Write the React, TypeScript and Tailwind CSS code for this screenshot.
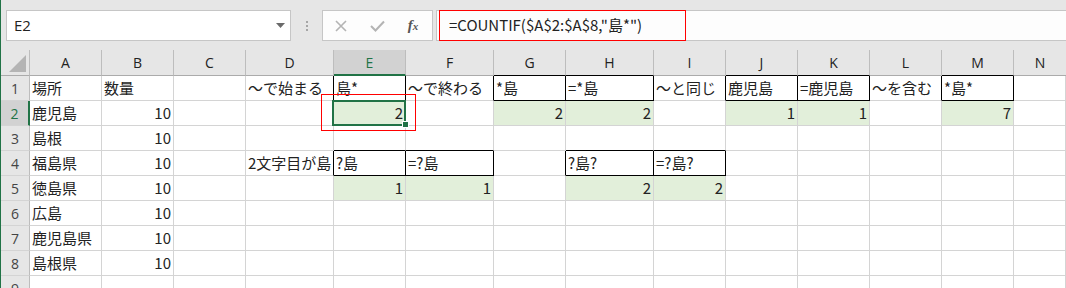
import React from 'react';

const LETTERS = ['A', 'B', 'C', 'D', 'E', 'F', 'G', 'H', 'I', 'J', 'K', 'L', 'M', 'N'];
const ROWS = [1, 2, 3, 4, 5, 6, 7, 8, 9];

const values: Record<string, string> = {
  A1: '場所', B1: '数量', D1: '〜で始まる', E1: '島*', F1: '〜で終わる', G1: '*島', H1: '=*島',
  I1: '〜と同じ', J1: '鹿児島', K1: '=鹿児島', L1: '〜を含む', M1: '*島*',
  A2: '鹿児島', B2: '10', E2: '2', G2: '2', H2: '2', J2: '1', K2: '1', M2: '7',
  A3: '島根', B3: '10',
  A4: '福島県', B4: '10', D4: '2文字目が島', E4: '?島', F4: '=?島', H4: '?島?', I4: '=?島?',
  A5: '徳島県', B5: '10', E5: '1', F5: '1', H5: '2', I5: '2',
  A6: '広島', B6: '10',
  A7: '鹿児島県', B7: '10',
  A8: '島根県', B8: '10',
};

const boxed = new Set(['E1', 'G1', 'H1', 'J1', 'K1', 'M1', 'E4', 'F4', 'H4', 'I4']);
const filled = new Set(['E2', 'G2', 'H2', 'J2', 'K2', 'M2', 'E5', 'F5', 'H5', 'I5']);

const jp = "font-['Noto_Sans_CJK_JP',sans-serif]";
const ui = "font-['Open_Sans','Noto_Sans',sans-serif]";

function key(c: number, r: number) {
  return `${LETTERS[c] ?? ''}${r}`;
}

function Cell({ c, r }: { c: number; r: number }) {
  const id = key(c, r);
  const v = values[id];
  const num = v !== undefined && /^\d+$/.test(v);
  const rightBlack = boxed.has(id) || boxed.has(key(c + 1, r));
  const bottomBlack = boxed.has(id) || boxed.has(key(c, r + 1));
  const selected = id === 'E2';

  return (
    <div
      className={`h-[25px] border-r border-b px-[2px] flex items-center whitespace-nowrap text-[15px] text-[#222] ${jp} ${
        rightBlack ? 'border-r-black' : 'border-r-[#d4d4d4]'
      } ${bottomBlack ? 'border-b-black' : 'border-b-[#d4d4d4]'} ${
        filled.has(id) ? 'bg-[#e2efda]' : 'bg-white'
      } ${num ? 'justify-end' : ''} ${selected ? 'relative' : ''}`}
    >
      {v}
      {selected && (
        <>
          <div className="absolute left-[-2px] top-[-1px] right-[-1px] bottom-[-1px] border-2 border-[#217346] z-10" />
          <div className="absolute right-[-4px] bottom-[-3px] w-[7px] h-[7px] bg-[#217346] border border-white z-20" />
          <div className="absolute left-[-13px] top-[-7px] right-[-11px] bottom-[-6px] border border-[#ff0000] z-30" />
        </>
      )}
    </div>
  );
}

function FormulaBar() {
  return (
    <div className="h-[50px] bg-[#e6e6e6] flex items-start pt-[10px]">
      <div className={`ml-[5px] w-[285px] h-[31px] border border-[#c6c6c6] bg-white flex items-center justify-between pl-[7px] pr-[5px] text-[15px] text-[#222] ${ui}`}>
        <span>E2</span>
        <svg width="9" height="5" viewBox="0 0 9 5">
          <path d="M0 0 H9 L4.5 5 Z" fill="#6a6a6a" />
        </svg>
      </div>
      <div className="w-[31px] h-[31px] flex flex-col items-center justify-center gap-[2px]">
        <span className="w-[2px] h-[2px] bg-[#a6a6a6]" />
        <span className="w-[2px] h-[2px] bg-[#a6a6a6]" />
        <span className="w-[2px] h-[2px] bg-[#a6a6a6]" />
      </div>
      <div className="w-[111px] h-[31px] border border-[#c6c6c6] bg-[#fdfdfd] flex items-center">
        <div className="w-[36px] flex justify-center">
          <svg width="12" height="12" viewBox="0 0 12 12">
            <path d="M1 1 L11 11 M11 1 L1 11" stroke="#b4b4b4" strokeWidth="1.6" fill="none" />
          </svg>
        </div>
        <div className="w-[36px] flex justify-center">
          <svg width="15" height="12" viewBox="0 0 15 12">
            <path d="M1 6 L5.5 10.5 L14 1.5" stroke="#b4b4b4" strokeWidth="2" fill="none" />
          </svg>
        </div>
        <div className="w-[36px] flex justify-center items-baseline font-['Liberation_Serif',serif] italic text-[#555] font-bold">
          <span className="text-[15px] leading-none">f</span>
          <span className="text-[11px] leading-none">x</span>
        </div>
      </div>
      <div className="relative ml-[3px] flex-1 h-[31px] border border-r-0 border-[#c6c6c6] bg-[#fdfdfd] flex items-center pl-[12px]">
        <span className={`text-[15px] text-[#222] ${jp}`}>=COUNTIF($A$2:$A$8,"島*")</span>
        <div className="absolute left-[2px] top-[-1px] w-[247px] h-[31px] border border-[#ff0000]" />
      </div>
    </div>
  );
}

export default function App() {
  return (
    <div className="w-[1066px] h-[288px] overflow-hidden bg-white border-l border-l-[#217346]">
      <FormulaBar />
      <div className="grid grid-cols-[29px_72px_72px_72px_88px_72px_88px_72px_88px_72px_72px_72px_72px_72px_52px]">
        <div className="h-[26px] bg-[#e6e6e6] border-r border-b border-r-[#bdbdbd] border-b-[#ababab] flex items-end justify-end pr-[3px] pb-[3px]">
          <svg width="17" height="17" viewBox="0 0 17 17">
            <path d="M17 0 V17 H0 Z" fill="#b4b4b4" />
          </svg>
        </div>
        {LETTERS.map((l, i) => {
          const sel = l === 'E';
          const blackBottom = boxed.has(`${l}1`);
          return (
            <div
              key={l}
              className={`h-[26px] border-r border-r-[#bdbdbd] flex items-center justify-center text-[14px] ${ui} ${
                sel
                  ? 'bg-[#d2d2d2] text-[#217346] border-b-2 border-b-[#217346]'
                  : `bg-[#e6e6e6] text-[#222] border-b ${blackBottom ? 'border-b-black' : 'border-b-[#ababab]'}`
              } ${i === 13 ? 'border-r-0' : ''}`}
            >
              {l}
            </div>
          );
        })}
        {ROWS.map((r) => (
          <React.Fragment key={r}>
            <div
              className={`h-[25px] border-b border-b-[#d4d4d4] flex items-center justify-center text-[14px] ${ui} ${
                r === 2
                  ? 'bg-[#d2d2d2] text-[#217346] border-r-2 border-r-[#217346]'
                  : 'bg-[#e6e6e6] text-[#444] border-r border-r-[#bdbdbd]'
              }`}
            >
              {r}
            </div>
            {LETTERS.map((_, c) => (
              <Cell key={c} c={c} r={r} />
            ))}
          </React.Fragment>
        ))}
      </div>
    </div>
  );
}
